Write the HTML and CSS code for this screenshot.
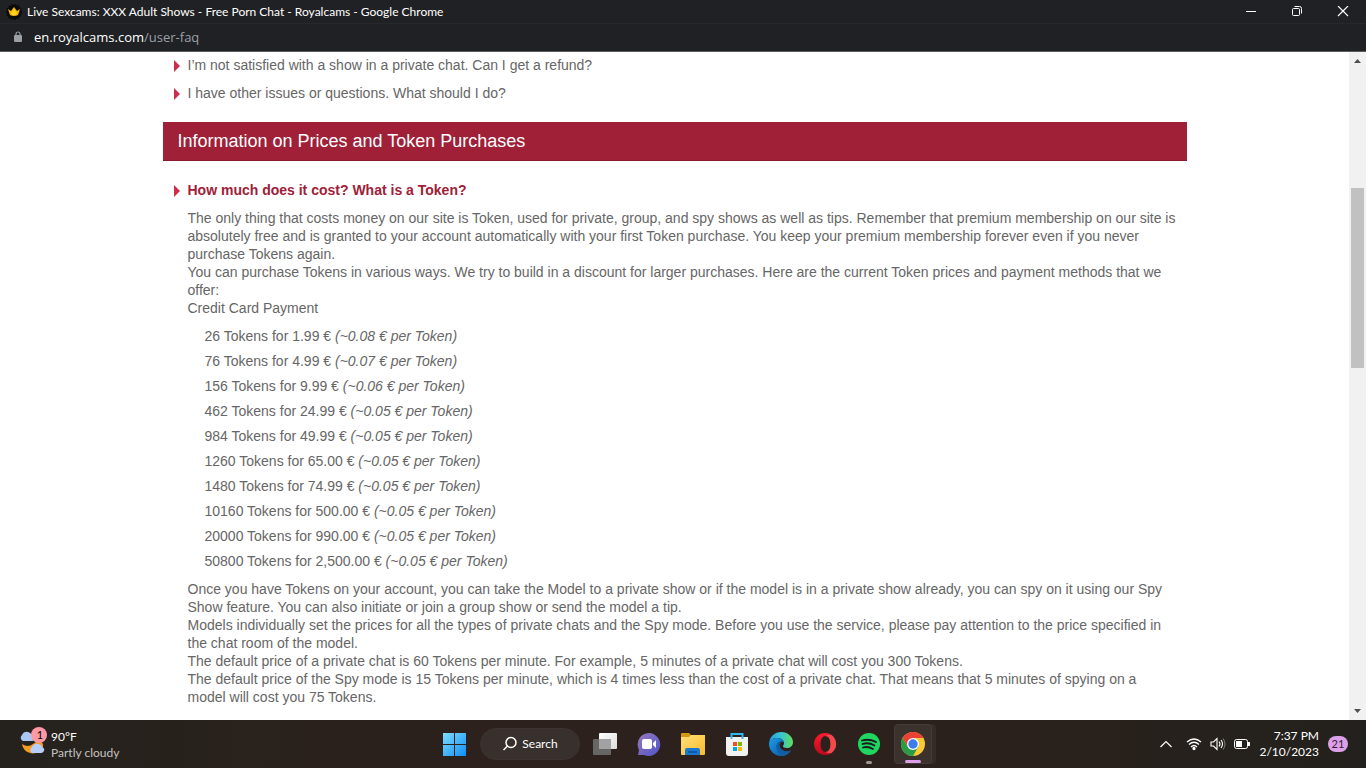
FILE: index.html
```html
<!DOCTYPE html>
<html lang="en">
<head>
    <meta charset="UTF-8">
    <meta name="viewport" content="width=device-width, initial-scale=1.0">
    <title>Live Sexcams: XXX Adult Shows - Free Porn Chat - Royalcams</title>
    <link rel="stylesheet" href="styles.css">
</head>
<body>
    <header class="titlebar">
        <svg class="favicon" width="16" height="16" viewBox="0 0 16 16">
            <circle cx="8" cy="8" r="7" fill="#0b0b0c" stroke="#0b0b0c" stroke-width="2" stroke-dasharray="2 1"/>
            <path d="M2 5l3 2 3-4 3 4 3-2-2 6q-4 2-8 0z" fill="#f7b500"/>
            <path d="M5 9l3-4 3 4-1 2H6z" fill="#ffd21f"/>
        </svg>
        <div class="windowtitle">Live Sexcams: XXX Adult Shows - Free Porn Chat - Royalcams - Google Chrome</div>
        <div class="windowbtns">
            <button type="button" class="windowbtn" aria-label="Minimize">
                <svg width="12" height="12" viewBox="0 0 12 12"><path d="M1 5.5h10" stroke="#fff"/></svg>
            </button>
            <button type="button" class="windowbtn" aria-label="Restore">
                <svg width="12" height="12" viewBox="0 0 12 12" fill="none" stroke="#fff"><rect x="1.5" y="2.5" width="7" height="7" rx="1"/><path d="M3.5 .5h5q2 0 2 2v5"/></svg>
            </button>
            <button type="button" class="windowbtn" aria-label="Close">
                <svg width="12" height="12" viewBox="0 0 12 12"><path d="M1 0l10 10M11 0L1 10" stroke="#fff" stroke-width="1.2"/></svg>
            </button>
        </div>
    </header>
    <div class="addressbar">
        <svg class="lock" width="10" height="12" viewBox="0 0 10 12">
            <rect x="1" y="4" width="8" height="7" rx="1" fill="#9aa0a6"/>
            <path d="M3 5V3a2 2 0 0 1 4 0v2" fill="none" stroke="#9aa0a6" stroke-width="1.2"/>
        </svg>
        <div class="url">en.royalcams.com<span class="path">/user-faq</span></div>
    </div>

    <div class="viewport">
        <main class="page">
            <div class="faq">
                <a href="#" class="question">I’m not satisfied with a show in a private chat. Can I get a refund?</a>
                <a href="#" class="question">I have other issues or questions. What should I do?</a>

                <h2 class="section">Information on Prices and Token Purchases</h2>

                <a href="#" class="question open">How much does it cost? What is a Token?</a>
                <div class="answer">
                    <p>The only thing that costs money on our site is Token, used for private, group, and spy shows as well as tips. Remember that premium membership on our site is absolutely free and is granted to your account automatically with your first Token purchase. You keep your premium membership forever even if you never purchase Tokens again.</p>
                    <p>You can purchase Tokens in various ways. We try to build in a discount for larger purchases. Here are the current Token prices and payment methods that we offer:</p>
                    <p>Credit Card Payment</p>
                    <ul class="prices">
                        <li>26 Tokens for 1.99 € <em>(~0.08 € per Token)</em></li>
                        <li>76 Tokens for 4.99 € <em>(~0.07 € per Token)</em></li>
                        <li>156 Tokens for 9.99 € <em>(~0.06 € per Token)</em></li>
                        <li>462 Tokens for 24.99 € <em>(~0.05 € per Token)</em></li>
                        <li>984 Tokens for 49.99 € <em>(~0.05 € per Token)</em></li>
                        <li>1260 Tokens for 65.00 € <em>(~0.05 € per Token)</em></li>
                        <li>1480 Tokens for 74.99 € <em>(~0.05 € per Token)</em></li>
                        <li>10160 Tokens for 500.00 € <em>(~0.05 € per Token)</em></li>
                        <li>20000 Tokens for 990.00 € <em>(~0.05 € per Token)</em></li>
                        <li>50800 Tokens for 2,500.00 € <em>(~0.05 € per Token)</em></li>
                    </ul>
                    <p>Once you have Tokens on your account, you can take the Model to a private show or if the model is in a private show already, you can spy on it using our Spy Show feature. You can also initiate or join a group show or send the model a tip.</p>
                    <p>Models individually set the prices for all the types of private chats and the Spy mode. Before you use the service, please pay attention to the price specified in the chat room of the model.</p>
                    <p>The default price of a private chat is 60 Tokens per minute. For example, 5 minutes of a private chat will cost you 300 Tokens.</p>
                    <p>The default price of the Spy mode is 15 Tokens per minute, which is 4 times less than the cost of a private chat. That means that 5 minutes of spying on a model will cost you 75 Tokens.</p>
                </div>
            </div>
        </main>
        <div class="scrollbar">
            <svg width="17" height="17" viewBox="0 0 17 17"><path d="M5 11h7L8.500 7z" fill="#505050"/></svg>
            <div class="track">
                <div class="before"></div>
                <div class="thumb"></div>
                <div class="after"></div>
            </div>
            <svg width="17" height="17" viewBox="0 0 17 17"><path d="M5 6h7l-3.500 4z" fill="#505050"/></svg>
        </div>
    </div>

    <footer class="taskbar">
        <button type="button" class="weather">
            <svg width="28" height="28" viewBox="0 0 28 28">
                <path d="M2 17q6 4 11 0 4-3 6-2 5 0 4 5-5 8-13 6-7-2-8-9z" fill="#f59a23"/>
                <path d="M3 14a3.500 3.500 0 0 1-1-6q2-4 6-3 5 1 5 9z" fill="#a9c8f5"/>
                <path d="M12 26a3.500 3.500 0 0 1 0-6q2-4 6-3 3 0 4 3 3 1 2 4-1 2-3 2z" fill="#b5cffa"/>
                <circle cx="19" cy="8" r="8" fill="#ff99a4"/>
                <text class="count" x="20" y="12" text-anchor="middle">1</text>
            </svg>
            <span class="weathertext">90°F<span class="sky">Partly cloudy</span></span>
        </button>

        <div class="apps">
            <button type="button" class="app" aria-label="Start">
                <svg width="24" height="24" viewBox="0 0 24 24">
                    <defs><linearGradient id="win" x1="0" y1="0" x2="1" y2="1"><stop offset="0" stop-color="#7fdcff"/><stop offset="1" stop-color="#0c8ff5"/></linearGradient></defs>
                    <path d="M0 1h11v11H0zM12 1h11v11H12zM0 13h11v11H0zM12 13h11v11H12z" fill="url(#win)"/>
                </svg>
            </button>
            <button type="button" class="search">
                <svg width="16" height="16" viewBox="0 0 16 16" fill="none" stroke="#fff" stroke-width="1.500"><circle cx="9" cy="6.500" r="5"/><path d="M5.500 10L1.500 14"/></svg>
                Search
            </button>
            <button type="button" class="app" aria-label="Task View">
                <svg width="24" height="24" viewBox="0 0 24 24">
                    <defs><linearGradient id="tv" x1="0" y1="0" x2="1" y2="1"><stop offset="0" stop-color="#fff"/><stop offset="1" stop-color="#dcdcdc"/></linearGradient></defs>
                    <rect x="0" y="7" width="18" height="16" rx="1" fill="#676665"/>
                    <rect x="6" y="1" width="18" height="16" rx="1" fill="url(#tv)"/>
                    <rect x="6" y="7" width="12" height="10" fill="#a2a2a2"/>
                </svg>
            </button>
            <button type="button" class="app" aria-label="Chat">
                <svg width="24" height="24" viewBox="0 0 24 24">
                    <defs><linearGradient id="chat" x1="0" y1="0" x2="1" y2="1"><stop offset="0" stop-color="#9a78bd"/><stop offset="1" stop-color="#4d55c8"/></linearGradient></defs>
                    <path d="M12 1a11.500 11.500 0 1 1-5 22H1l1-5A11.500 11.500 0 0 1 12 1z" fill="url(#chat)"/>
                    <rect x="5" y="7" width="10" height="10" rx="2" fill="#fff"/>
                    <path d="M16 11l3-3v8l-3-3z" fill="#fff"/>
                </svg>
            </button>
            <button type="button" class="app" aria-label="File Explorer">
                <svg width="24" height="24" viewBox="0 0 24 24">
                    <defs><linearGradient id="folder" x1="0" y1="0" x2="1" y2="1"><stop offset="0" stop-color="#ffe07a"/><stop offset="1" stop-color="#fcbb2c"/></linearGradient></defs>
                    <path d="M0 2q0-1 1-1h7l2 2v3H0z" fill="#d59a0c"/>
                    <path d="M0 5h8l2-2h14v19q0 1-1 1H1q-1 0-1-1z" fill="url(#folder)"/>
                    <path d="M4 23v-5q0-2 2-2h11q2 0 2 2v5z" fill="#1979d0"/>
                    <path d="M7 20h9" stroke="#0b4f94" stroke-width="1.500"/>
                </svg>
            </button>
            <button type="button" class="app" aria-label="Microsoft Store">
                <svg width="24" height="24" viewBox="0 0 24 24">
                    <path d="M1 5h22v16q0 3-3 3H4q-3 0-3-3z" fill="#f1f1f1"/>
                    <path d="M6.500 7V2h11v5" fill="none" stroke="#35b5ee" stroke-width="2"/>
                    <path d="M8 10h4v4H8z" fill="#f25022"/>
                    <path d="M13 10h4v4h-4z" fill="#7fba00"/>
                    <path d="M8 15h4v4H8z" fill="#00a4ef"/>
                    <path d="M13 15h4v4h-4z" fill="#ffb900"/>
                </svg>
            </button>
            <button type="button" class="app" aria-label="Edge">
                <svg width="24" height="24" viewBox="0 0 24 24">
                    <defs>
                        <linearGradient id="edgetop" x1="0" y1="0" x2="1" y2="0"><stop offset="0" stop-color="#259fdf"/><stop offset=".5" stop-color="#37c5d4"/><stop offset="1" stop-color="#63dc55"/></linearGradient>
                        <linearGradient id="edgelow" x1="0" y1="0" x2="1" y2="1"><stop offset="0" stop-color="#1b9ce8"/><stop offset="1" stop-color="#0c59a4"/></linearGradient>
                    </defs>
                    <path d="M0 11C1 4 6 0 12 0c7 0 12 5 12 10 0 4-3 6-6 6-3 0-4-1-4-2s1-1 1-3c0-3-3-5-7-5-4 0-7 2-8 5z" fill="url(#edgetop)"/>
                    <path d="M0 12c0-4 4-6 8-6 3 0 6 2 7 4-5-2-8 2-7 6 1 4 5 7 9 7-2 1-3 1-5 1C5 24 0 18 0 12z" fill="url(#edgelow)"/>
                    <path d="M11 9.500C7 11 7 15 8 18c2 4 5 6 8 5.500 3-1 5-3 6.500-5.500-5 2.500-10 1-11.500-3-1-2 0-4 1-5z" fill="#155ca6"/>
                </svg>
            </button>
            <button type="button" class="app" aria-label="Opera">
                <svg width="24" height="24" viewBox="0 0 24 24">
                    <defs><linearGradient id="opera" x1="0" y1="0" x2="0" y2="1"><stop offset="0" stop-color="#ff1b2d"/><stop offset="1" stop-color="#b80a1c"/></linearGradient></defs>
                    <path d="M12 1a11 11 0 1 0 0 22a11 11 0 1 0 0-22zM12.500 4c3 0 5 3 5 8s-2 8-5 8-5-3-5-8 2-8 5-8z" fill="url(#opera)" fill-rule="evenodd"/>
                    <path d="M12.500 4q3-2 6-1a11 11 0 0 1 0 18q-3 1-6-1c3 0 5-3 5-8s-2-8-5-8z" fill="#f04a4c"/>
                </svg>
            </button>
            <button type="button" class="app running" aria-label="Spotify">
                <svg width="24" height="24" viewBox="0 0 24 24">
                    <circle cx="12" cy="12" r="11" fill="#1ed760"/>
                    <path d="M5 8.500q7-2 14 1.500M5.500 12q6-2 12 1.500M6 15.500q5-1.500 10 1.500" fill="none" stroke="#1b1b1b" stroke-width="1.800" stroke-linecap="round"/>
                </svg>
            </button>
            <button type="button" class="app active" aria-label="Google Chrome">
                <svg width="24" height="24" viewBox="0 0 24 24">
                    <circle cx="12" cy="12" r="12" fill="#fcc934"/>
                    <path d="M1.600 6A12 12 0 0 1 22.400 6H12L6.800 15z" fill="#ea4335"/>
                    <path d="M1.600 6A12 12 0 0 0 12 24l5.200-9H6.800z" fill="#2a9b47"/>
                    <circle cx="12" cy="12" r="6" fill="#fff"/>
                    <circle cx="12" cy="12" r="4.700" fill="#3b7ded"/>
                </svg>
            </button>
        </div>

        <div class="tray">
            <button type="button" class="trayicon" aria-label="Show hidden icons">
                <svg width="14" height="16" viewBox="0 0 14 16"><path d="M1.500 11L7 5.500l5.500 5.500" fill="none" stroke="#fff" stroke-width="1.200"/></svg>
            </button>
            <button type="button" class="status" aria-label="Network, volume and battery">
                <svg width="16" height="16" viewBox="0 0 16 16" fill="none" stroke="#fff" stroke-width="1.300"><path d="M1 6q7-6 14 0M3 8.500q5-4.500 10 0M5 11q3-3 6 0"/><circle cx="8" cy="12.500" r="1" fill="#fff"/></svg>
                <svg width="16" height="16" viewBox="0 0 16 16" fill="none" stroke="#fff" stroke-width="1.100"><path d="M1 6h2.500L7 2.500v11L3.500 10H1zM9 5.500q2 2.500 0 5M11 4q3 4 0 8"/><path d="M13 2.500q4 5.500 0 11" stroke="#77736f"/></svg>
                <svg width="16" height="16" viewBox="0 0 16 16"><rect x=".5" y="3.500" width="13" height="9" rx="2" fill="none" stroke="#fff"/><path d="M2 5h6v6H2zM14 6h2v4h-2z" fill="#fff"/></svg>
            </button>
            <div class="clock">7:37 PM<br>2/10/2023</div>
            <div class="notifications">21</div>
        </div>
    </footer>
</body>
</html>
```
FILE: styles.css
```css
* {
    box-sizing: border-box;
}

body {
    margin: 0;
    height: 100vh;
    display: flex;
    flex-direction: column;
    overflow: hidden;
    background-color: #fff;
    font-family: "Liberation Sans", Arial, sans-serif;
    font-size: 14px;
    line-height: 18px;
}

button {
    padding: 0;
    border: 0;
    background: none;
    color: #fff;
    font: inherit;
}

svg {
    display: block;
    flex-shrink: 0;
}

/* browser window */

.titlebar,
.addressbar {
    display: flex;
    align-items: center;
    flex-shrink: 0;
    background-color: #202124;
    color: #fff;
}

.titlebar {
    height: 24px;
    padding-left: 6px;
    border-bottom: 1px solid #27282b;
    font-family: Lato, "Open Sans", sans-serif;
    font-size: 12px;
}

.windowtitle {
    flex: 1;
    padding-left: 5px;
    white-space: nowrap;
}

.windowbtns {
    display: flex;
}

.windowbtn {
    display: flex;
    align-items: center;
    justify-content: center;
    width: 46px;
    height: 20px;
}

.addressbar {
    height: 28px;
    padding: 0 13px 2px;
    border-bottom: 1px solid #5a5b5e;
    font-family: "Open Sans", "Noto Sans", sans-serif;
    font-size: 13px;
}

.url {
    padding-left: 11px;
}

.path {
    color: #9aa0a6;
}

/* faq page */

.viewport {
    flex: 1;
    min-height: 0;
    display: flex;
}

.page {
    flex: 1;
    overflow: hidden;
    color: #666;
}

.faq {
    display: flex;
    flex-direction: column;
    gap: 10px;
    max-width: 1024px;
    margin: 0 auto;
    padding-top: 4px;
}

.question {
    display: flex;
    align-items: center;
    gap: 8px;
    padding-left: 11px;
    color: #666;
    text-decoration: none;
}

.question::before {
    content: "";
    margin-top: 2px;
    border-left: 6px solid #cb2d4f;
    border-top: 6px solid transparent;
    border-bottom: 6px solid transparent;
}

.open {
    color: #a02037;
    font-weight: bold;
}

.section {
    margin: 10px 0;
    padding: 10px 15px;
    background-color: #a02037;
    border-bottom: 1px solid #8c1a2e;
    color: #fff;
    font-size: 18px;
    font-weight: normal;
}

.answer {
    padding: 0 10px 0 25px;
}

.answer p {
    margin: 0;
}

.prices {
    display: flex;
    flex-direction: column;
    gap: 7px;
    margin: 10px 0;
    padding: 0 0 0 17px;
    list-style: none;
}

.scrollbar {
    display: flex;
    flex-direction: column;
    width: 17px;
    background-color: #f1f1f1;
}

.track {
    flex: 1;
    display: flex;
    flex-direction: column;
    padding: 0 2px;
}

.before {
    flex: 119;
}

.thumb {
    flex: 180;
    background-color: #c1c1c1;
}

.after {
    flex: 335;
}

/* taskbar */

.taskbar {
    display: grid;
    grid-template-columns: 1fr auto 1fr;
    align-items: center;
    flex-shrink: 0;
    height: 48px;
    background: linear-gradient(90deg, #25221d, #2c211c 35%, #2c211c 65%, #23211d);
    color: #fff;
    font-family: Lato, "Open Sans", sans-serif;
    font-size: 12px;
    line-height: 16px;
}

.weather {
    display: flex;
    gap: 3px;
    padding-left: 20px;
    text-align: left;
}

.weathertext {
    padding-top: 2px;
}

.sky {
    display: block;
    color: #c4c2c0;
}

.count {
    font-size: 11px;
}

.apps {
    display: flex;
    align-items: center;
    padding-left: 2px;
}

.app {
    display: flex;
    align-items: center;
    justify-content: center;
    width: 44px;
    height: 40px;
}

.search {
    display: flex;
    align-items: center;
    justify-content: center;
    gap: 4px;
    width: 100px;
    height: 32px;
    margin: 0 3px;
    border: 1px solid #3d3430;
    border-radius: 16px;
    background-color: #38302c;
}

.running,
.active {
    position: relative;
}

.active {
    width: 38px;
    margin: 0 3px;
    border: 1px solid #453b37;
    border-radius: 4px;
    background-color: #3b322e;
    box-shadow: 4px 0 #352b27;
}

.running::after,
.active::after {
    content: "";
    position: absolute;
    bottom: 0;
    width: 6px;
    height: 3px;
    border-radius: 2px;
    background-color: #9b9794;
}

.active::after {
    width: 16px;
    background-color: #dda0e8;
}

.tray {
    display: flex;
    align-items: center;
    justify-content: flex-end;
    padding-right: 18px;
}

.trayicon {
    margin-right: 13px;
}

.status {
    display: flex;
    gap: 8px;
    margin-right: 9px;
}

.clock {
    text-align: right;
}

.notifications {
    width: 20px;
    margin-left: 9px;
    border-radius: 8px;
    background-color: #dda0e8;
    color: #33203a;
    font-size: 11px;
    text-align: center;
}
```
